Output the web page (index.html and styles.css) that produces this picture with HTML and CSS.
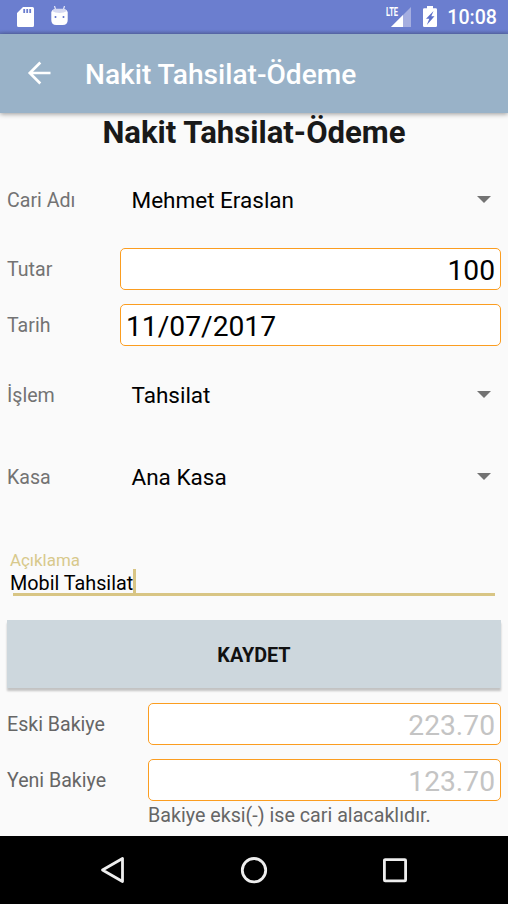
FILE: index.html
```html
<!DOCTYPE html>
<html lang="tr">
<head>
<meta charset="utf-8">
<title>Nakit Tahsilat-Ödeme</title>
<link rel="stylesheet" href="styles.css">
</head>
<body>
<div class="statusbar">
  <svg class="sd" width="17" height="20" viewBox="0 0 17 20"><path fill="#fff" fill-rule="evenodd" d="M6 0H15.5Q17 0 17 1.5V18.500Q17 20 15.500 20H1.500Q0 20 0 18.500V6ZM6.300 2v4h1.800V2ZM9.300 2v4h1.800V2ZM12.300 2v4h1.800V2Z"/></svg>
  <svg class="droid" width="17" height="20" viewBox="0 0 17 20"><path d="M3.500 0l1.200 4M13.500 0l-1.200 4" stroke="#e8eaf8" stroke-width="1.200"/><path fill="#fff" d="M.3 6Q1 3.500 4 3h9q3 .5 3.700 3v8q0 5-5 5h-6.400q-5 0-5-5Z"/><path fill="#d5d9f1" d="M1 5Q3 2.800 5 2.800h7q2 0 4 2.200Q13 7 8.500 7T1 5Z"/><circle cx="4.500" cy="11" r="1" fill="#5d70ca"/><circle cx="12.500" cy="11" r="1" fill="#5d70ca"/></svg>
  <span class="spacer"></span>
  <div class="signal">
    <svg width="20" height="20" viewBox="0 0 20 20"><path fill="#a5aee0" d="M20 0V20H0Z"/><path fill="#fff" d="M12 8V20H0Z"/></svg>
    <span class="lte">LTE</span>
  </div>
  <svg class="battery" width="14" height="21" viewBox="0 0 14 21"><path fill="#fff" d="M4 0h6v2.200h2.700q1.300 0 1.300 1.300V19.700Q14 21 12.700 21H1.300Q0 21 0 19.700V3.500Q0 2.200 1.300 2.200H4Z"/><path fill="#5d70ca" d="M10.500 5L3 12.800h3.300L3.800 19 11.500 10.300H8.300Z"/></svg>
  <span class="clock">10:08</span>
</div>
<header class="appbar">
  <svg width="24" height="24" viewBox="0 0 24 24"><path d="M23.500 12H3M13.300 1.500L2.800 12l10.500 10.500" fill="none" stroke="#fff" stroke-width="2.700"/></svg>
  <span>Nakit Tahsilat-Ödeme</span>
</header>
<main>
  <h1>Nakit Tahsilat-Ödeme</h1>
  <div class="row select first"><label>Cari Adı</label><span class="value">Mehmet Eraslan</span><i class="caret"></i></div>
  <div class="row"><label>Tutar</label><div class="box right">100</div></div>
  <div class="row"><label>Tarih</label><div class="box">11/07/2017</div></div>
  <div class="row select"><label>İşlem</label><span class="value">Tahsilat</span><i class="caret"></i></div>
  <div class="row select"><label>Kasa</label><span class="value">Ana Kasa</span><i class="caret"></i></div>
  <div class="note-field">
    <div class="hint">Açıklama</div>
    <div class="note"><span>Mobil Tahsilat</span><i class="cursor"></i></div>
    <div class="underline"></div>
  </div>
  <div class="save">KAYDET</div>
  <div class="row balance"><label>Eski Bakiye</label><div class="box right muted">223.70</div></div>
  <div class="row balance"><label>Yeni Bakiye</label><div class="box right muted">123.70</div></div>
  <p class="footnote">Bakiye eksi(-) ise cari alacaklıdır.</p>
</main>
<nav>
  <svg width="26" height="28" viewBox="0 0 26 28"><path d="M22.500 2.500V25.500L2.500 14Z" fill="none" stroke="#eee" stroke-width="2.800" stroke-linejoin="round"/></svg>
  <svg width="28" height="28" viewBox="0 0 28 28"><circle cx="14" cy="14.200" r="11.700" fill="none" stroke="#eee" stroke-width="2.800"/></svg>
  <svg width="26" height="28" viewBox="0 0 26 28"><rect x="2.400" y="3.600" width="21.200" height="21.200" rx=".8" fill="none" stroke="#eee" stroke-width="2.800"/></svg>
</nav>
</body>
</html>
```
FILE: styles.css
```css
* { box-sizing: border-box; }
body {
  margin: 0;
  width: 508px;
  height: 904px;
  overflow: hidden;
  display: flex;
  flex-direction: column;
  background: #fafafa;
  font-family: Roboto, sans-serif;
  color: #000;
}
svg { display: block; flex: none; }
.statusbar {
  height: 34px;
  display: flex;
  align-items: flex-start;
  padding: 7px 11px 0 17px;
  background: linear-gradient(#6b7ecf 30px, #5f71b8);
  color: #fff;
}
.droid { margin: -1px 0 0 17px; }
.spacer { flex: 1; }
.signal { position: relative; margin-right: 12px; }
.lte {
  position: absolute;
  left: -5px;
  top: -1px;
  font-size: 12.5px;
  line-height: 12px;
  font-weight: 700;
  transform: scaleX(.6);
  transform-origin: left;
}
.battery { margin: -1px 10px 0 0; }
.clock { font-size: 19.6px; line-height: 22px; font-weight: 500; }
.appbar {
  height: 79px;
  display: flex;
  align-items: center;
  padding: 1px 0 0 27px;
  gap: 34px;
  background: #99b2c8;
  box-shadow: 0 1px 5px rgba(0, 0, 0, .4);
  color: #fff;
  font-size: 28.1px;
  font-weight: 500;
  z-index: 1;
}
.appbar svg { margin-top: -2px; }
main { height: 723px; padding: 0 7px; }
h1 {
  margin: 0;
  height: 40px;
  font-size: 31.1px;
  line-height: 40px;
  font-weight: 700;
  text-align: center;
  color: #191919;
}
.row {
  display: flex;
  align-items: center;
  height: 43px;
  margin-bottom: 13.5px;
}
.row label { width: 113px; flex: none; padding-top: 1px; font-size: 19.6px; color: #737373; }
.select { height: 82px; margin: 0; padding-right: 10px; }
.select label { padding-top: 0; }
.select.first { height: 94px; }
.row + .select:not(.first) { margin-top: -6px; }
.select + .select:not(.first) { margin-top: 0; }
.value { flex: 1; padding-left: 11.500px; font-size: 22.500px; margin-top: -1px; }
.caret {
  margin-top: -1px;
  border: 7px solid transparent;
  border-top-color: #737373;
  border-bottom: 0;
}
.box {
  flex: 1;
  height: 42px;
  margin-bottom: 0;
  border: 1.500px solid #fb9d20;
  border-radius: 5px;
  background: #fff;
  padding: 0 5px;
  font-size: 28.200px;
  line-height: 43px;
}
.right { text-align: right; }
.muted { color: #c4c4c4; }
.note-field { height: 102px; padding: 32px 6px 0 3px; }
.hint { font-size: 16.9px; line-height: 20px; color: #d8c98c; }
.note { display: flex; height: 23px; font-size: 19.800px; line-height: 27px; }
.cursor { width: 3px; height: 24px; margin-top: -1px; background: #d8c584; }
.underline { height: 3px; margin-left: 3px; background: #d8c584; }
.save {
  height: 68px;
  margin-bottom: 14px;
  background: #cdd7dd;
  box-shadow: 0 3px 2px rgba(0, 0, 0, .22);
  text-align: center;
  font-size: 19.800px;
  line-height: 71px;
  font-weight: 700;
  color: #111;
}
.balance label { width: 141px; color: #666; }
.footnote {
  margin: -13px 0 0 141px;
  font-size: 19.700px;
  line-height: 28px;
  color: #666;
}
nav {
  height: 68px;
  display: flex;
  justify-content: space-between;
  padding: 20px 100px 0;
  background: #000;
}
```
